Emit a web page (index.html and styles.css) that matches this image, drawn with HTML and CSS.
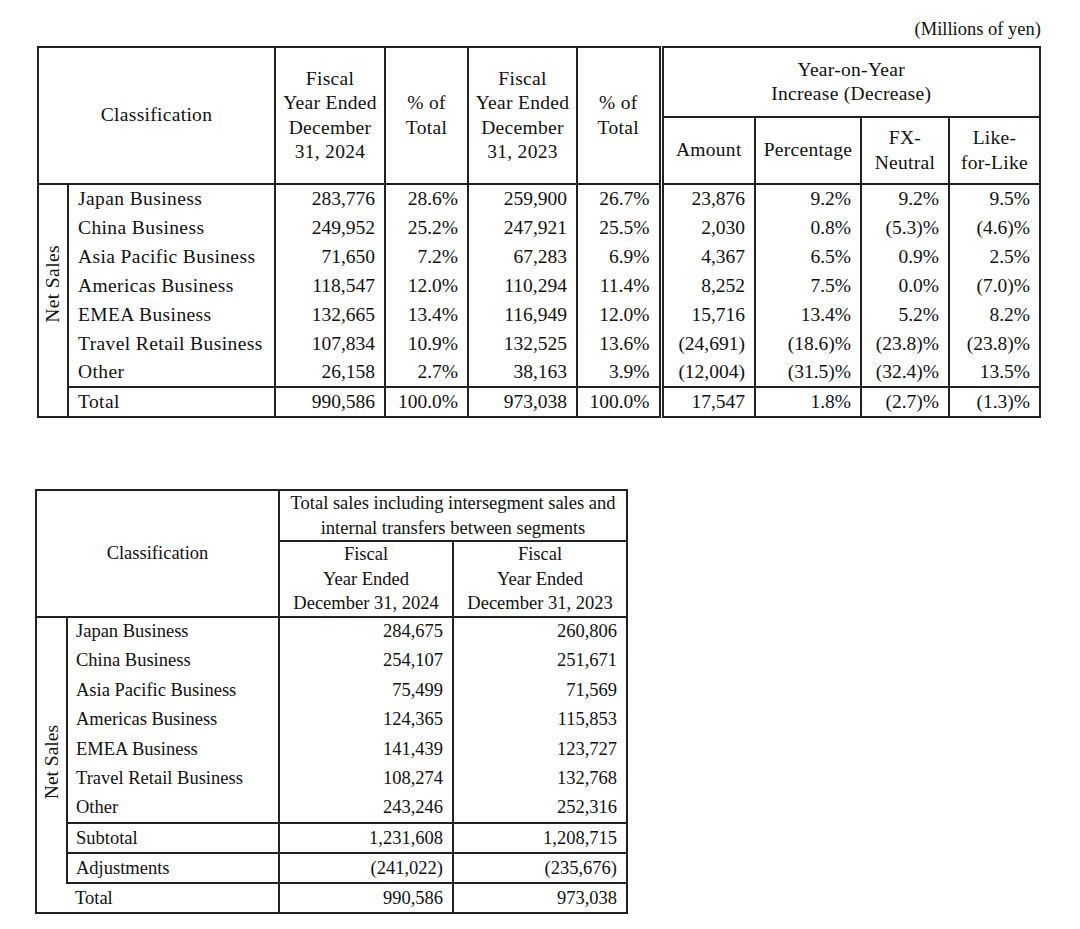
FILE: index.html
```html
<!DOCTYPE html>
<html lang="en">
<head>
<meta charset="utf-8">
<title>Net Sales by Segment</title>
<link rel="stylesheet" href="styles.css">
</head>
<body>
<div class="page">
  <div class="unit">(Millions of yen)</div>
  <table class="seg">
    <colgroup>
      <col class="c-side"><col class="c-lbl"><col class="c-fy"><col class="c-pct"><col class="c-fy2"><col class="c-pct2"><col class="c-amt"><col class="c-perc"><col class="c-fx"><col class="c-lfl">
    </colgroup>
    <thead>
      <tr class="h1">
        <th colspan="2" rowspan="2">Classification</th>
        <th rowspan="2">Fiscal<br>Year Ended<br>December<br>31, 2024</th>
        <th rowspan="2">% of<br>Total</th>
        <th rowspan="2">Fiscal<br>Year Ended<br>December<br>31, 2023</th>
        <th rowspan="2">% of<br>Total</th>
        <th colspan="4" class="dbl">Year-on-Year<br>Increase (Decrease)</th>
      </tr>
      <tr class="h2">
        <th class="dbl">Amount</th>
        <th>Percentage</th>
        <th>FX-<br>Neutral</th>
        <th>Like-<br>for-Like</th>
      </tr>
    </thead>
    <tbody>
      <tr>
        <td class="side" rowspan="7"><span class="vert">Net Sales</span></td>
        <td class="lbl">Japan Business</td><td class="num">283,776</td><td class="num">28.6%</td><td class="num">259,900</td><td class="num">26.7%</td><td class="num dbl">23,876</td><td class="num">9.2%</td><td class="num">9.2%</td><td class="num">9.5%</td>
      </tr>
      <tr>
        <td class="lbl">China Business</td><td class="num">249,952</td><td class="num">25.2%</td><td class="num">247,921</td><td class="num">25.5%</td><td class="num dbl">2,030</td><td class="num">0.8%</td><td class="num">(5.3)%</td><td class="num">(4.6)%</td>
      </tr>
      <tr>
        <td class="lbl">Asia Pacific Business</td><td class="num">71,650</td><td class="num">7.2%</td><td class="num">67,283</td><td class="num">6.9%</td><td class="num dbl">4,367</td><td class="num">6.5%</td><td class="num">0.9%</td><td class="num">2.5%</td>
      </tr>
      <tr>
        <td class="lbl">Americas Business</td><td class="num">118,547</td><td class="num">12.0%</td><td class="num">110,294</td><td class="num">11.4%</td><td class="num dbl">8,252</td><td class="num">7.5%</td><td class="num">0.0%</td><td class="num">(7.0)%</td>
      </tr>
      <tr>
        <td class="lbl">EMEA Business</td><td class="num">132,665</td><td class="num">13.4%</td><td class="num">116,949</td><td class="num">12.0%</td><td class="num dbl">15,716</td><td class="num">13.4%</td><td class="num">5.2%</td><td class="num">8.2%</td>
      </tr>
      <tr>
        <td class="lbl">Travel Retail Business</td><td class="num">107,834</td><td class="num">10.9%</td><td class="num">132,525</td><td class="num">13.6%</td><td class="num dbl">(24,691)</td><td class="num">(18.6)%</td><td class="num">(23.8)%</td><td class="num">(23.8)%</td>
      </tr>
      <tr>
        <td class="lbl">Other</td><td class="num">26,158</td><td class="num">2.7%</td><td class="num">38,163</td><td class="num">3.9%</td><td class="num dbl">(12,004)</td><td class="num">(31.5)%</td><td class="num">(32.4)%</td><td class="num">13.5%</td>
      </tr>
      <tr class="sep total">
        <td class="blank"></td>
        <td class="lbl">Total</td><td class="num">990,586</td><td class="num">100.0%</td><td class="num">973,038</td><td class="num">100.0%</td><td class="num dbl">17,547</td><td class="num">1.8%</td><td class="num">(2.7)%</td><td class="num">(1.3)%</td>
      </tr>
    </tbody>
  </table>

  <table class="seg2">
    <colgroup>
      <col class="d-side"><col class="d-lbl"><col class="d-fy"><col class="d-fy">
    </colgroup>
    <thead>
      <tr class="k1">
        <th colspan="2" rowspan="2">Classification</th>
        <th colspan="2">Total sales including intersegment sales and<br>internal transfers between segments</th>
      </tr>
      <tr class="k2">
        <th>Fiscal<br>Year Ended<br>December 31, 2024</th>
        <th>Fiscal<br>Year Ended<br>December 31, 2023</th>
      </tr>
    </thead>
    <tbody>
      <tr>
        <td class="side" rowspan="10"><span class="vert">Net Sales</span></td>
        <td class="lbl">Japan Business</td><td class="num">284,675</td><td class="num">260,806</td>
      </tr>
      <tr><td class="lbl">China Business</td><td class="num">254,107</td><td class="num">251,671</td></tr>
      <tr><td class="lbl">Asia Pacific Business</td><td class="num">75,499</td><td class="num">71,569</td></tr>
      <tr><td class="lbl">Americas Business</td><td class="num">124,365</td><td class="num">115,853</td></tr>
      <tr><td class="lbl">EMEA Business</td><td class="num">141,439</td><td class="num">123,727</td></tr>
      <tr><td class="lbl">Travel Retail Business</td><td class="num">108,274</td><td class="num">132,768</td></tr>
      <tr><td class="lbl">Other</td><td class="num">243,246</td><td class="num">252,316</td></tr>
      <tr class="sep"><td class="lbl">Subtotal</td><td class="num">1,231,608</td><td class="num">1,208,715</td></tr>
      <tr class="sep"><td class="lbl">Adjustments</td><td class="num">(241,022)</td><td class="num">(235,676)</td></tr>
      <tr class="sep total"><td class="lbl open">Total</td><td class="num">990,586</td><td class="num">973,038</td></tr>
    </tbody>
  </table>
</div>
</body>
</html>
```

FILE: styles.css
```css
html, body {
  margin: 0;
  padding: 0;
  background: #ffffff;
}

body {
  font-family: "Liberation Serif", "Times New Roman", serif;
  color: #111111;
}

.page {
  padding: 17px 0 20px 37px;
}

.unit {
  width: 1004px;
  text-align: right;
  font-size: 18.5px;
  line-height: 24px;
  margin-bottom: 5px;
}

table {
  border-collapse: collapse;
  table-layout: fixed;
  border: 2px solid #222222;
}

th, td {
  padding: 0;
  font-weight: normal;
  vertical-align: middle;
}

th {
  border: 2px solid #222222;
  text-align: center;
}

td {
  border-left: 2px solid #222222;
  border-right: 2px solid #222222;
  white-space: nowrap;
}

td.side {
  border: none;
  text-align: center;
}

td.blank {
  border: none;
}

.vert {
  display: inline-block;
  writing-mode: vertical-rl;
  transform: rotate(180deg);
}

td.lbl {
  text-align: left;
  padding-left: 9px;
}

td.num {
  text-align: right;
  padding-right: 9px;
}

tr.sep td.lbl,
tr.sep td.num {
  border-top: 2px solid #222222;
}

td.open {
  border-left: none;
}

.dbl {
  border-left: 5px double #222222;
}

/* ---------- Top table ---------- */
.seg {
  width: 1002px;
  font-size: 19.5px;
}

.seg th {
  line-height: 24.5px;
  letter-spacing: 0.3px;
}

.seg td.lbl,
.seg .vert {
  letter-spacing: 0.4px;
}

.seg .c-side { width: 30px; }
.seg .c-lbl { width: 207px; }
.seg .c-fy { width: 110px; }
.seg .c-pct { width: 83px; }
.seg .c-fy2 { width: 109px; }
.seg .c-pct2 { width: 84px; }
.seg .c-amt { width: 94px; }
.seg .c-perc { width: 106px; }
.seg .c-fx { width: 88px; }
.seg .c-lfl { width: 91px; }

.seg tr.h1 { height: 70px; }
.seg tr.h2 { height: 67px; }
.seg tbody tr { height: 29px; }
.seg tbody tr.total { height: 30px; }

/* ---------- Bottom table ---------- */
.seg2 {
  width: 593px;
  font-size: 18.5px;
  margin-top: 71px;
  margin-left: -2px;
}

.seg2 th {
  line-height: 24.5px;
}

.seg2 td.lbl {
  padding-left: 8px;
}

.seg2 .vert {
  font-size: 19.5px;
}

.seg2 .d-side { width: 31px; }
.seg2 .d-lbl { width: 212px; }
.seg2 .d-fy { width: 174px; }

.seg2 tr.k1 { height: 51px; }
.seg2 tr.k2 { height: 75px; }
.seg2 tbody tr { height: 29.5px; }
.seg2 tbody tr.sep { height: 30px; }
```
